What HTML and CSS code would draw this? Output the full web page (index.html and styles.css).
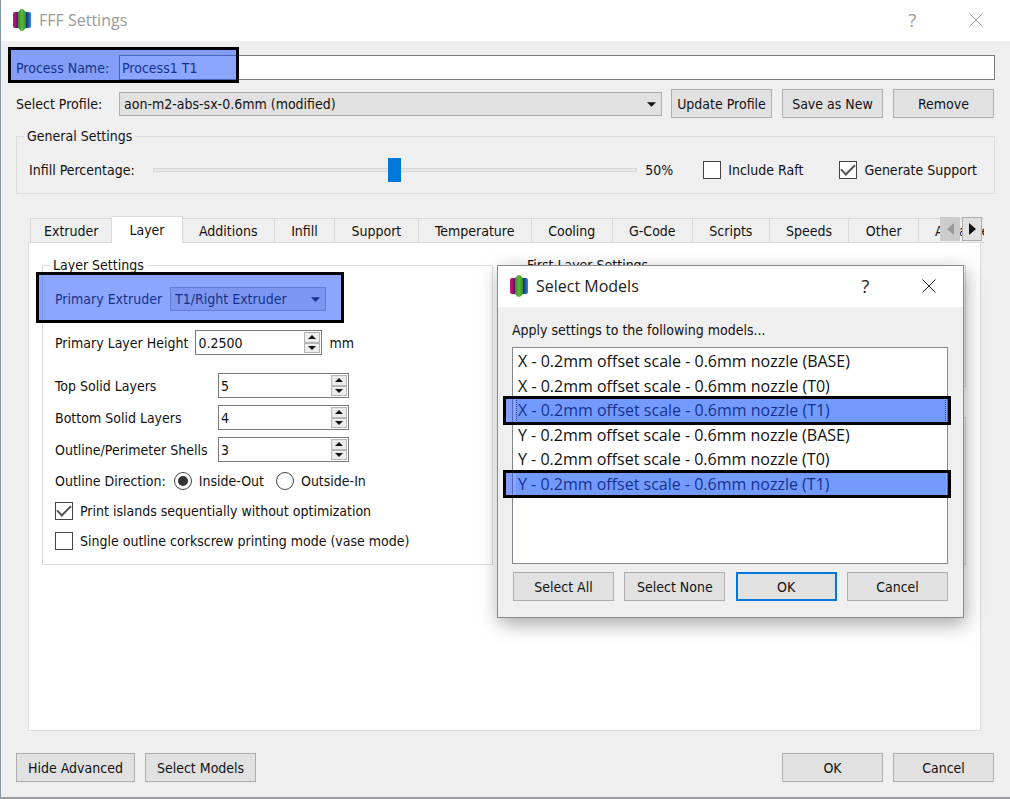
FILE: index.html
```html
<!DOCTYPE html>
<html lang="en">
<head>
  <meta charset="UTF-8">
  <meta name="viewport" content="width=device-width, initial-scale=1.0">
  <title>FFF Settings</title>
  <link rel="stylesheet" href="styles.css">
</head>
<body>
  <svg class="defs" aria-hidden="true">
    <defs>
      <linearGradient id="pink"><stop offset="0" stop-color="#d8107a"/><stop offset=".4" stop-color="#b0126e"/><stop offset="1" stop-color="#3c1658"/></linearGradient>
      <linearGradient id="blue"><stop offset="0" stop-color="#1a2560"/><stop offset=".6" stop-color="#1f5fb0"/><stop offset="1" stop-color="#2b8fe0"/></linearGradient>
      <linearGradient id="green"><stop offset="0" stop-color="#2a8a3e"/><stop offset=".5" stop-color="#62b82c"/><stop offset="1" stop-color="#2a8a3e"/></linearGradient>
    </defs>
    <symbol id="logo" viewBox="0 0 20 22">
      <path d="M1 5q0-2 2-2h3.500v16H3q-2 0-2-2z" fill="url(#pink)"/>
      <path d="M19 5q0-2-2-2h-3.500v16H17q2 0 2-2z" fill="url(#blue)"/>
      <path d="M6 4q0-2 1.500-2.300Q8 0 10 0t2.500 1.700Q14 2 14 4v14q0 2-1.500 2.300Q12 22 10 22t-2.500-1.700Q6 20 6 18z" fill="url(#green)"/>
    </symbol>
    <symbol id="close" viewBox="0 0 14 14"><path d="M.5.5l13 13M13.5.5l-13 13" stroke="currentColor" fill="none"/></symbol>
    <symbol id="up" viewBox="0 0 8 4"><path d="M0 4l4-4 4 4z" fill="currentColor"/></symbol>
    <symbol id="down" viewBox="0 0 8 4"><path d="M0 0l4 4 4-4z" fill="currentColor"/></symbol>
    <symbol id="left" viewBox="0 0 7 12"><path d="M7 0L0 6l7 6z" fill="currentColor"/></symbol>
    <symbol id="right" viewBox="0 0 7 12"><path d="M0 0l7 6-7 6z" fill="currentColor"/></symbol>
  </svg>

  <div class="window">
    <header class="titlebar inactive">
      <svg class="logo"><use href="#logo"/></svg>
      <h1>FFF Settings</h1>
      <button class="caption">?</button>
      <button class="caption" aria-label="Close"><svg class="x"><use href="#close"/></svg></button>
    </header>

    <main class="content">
      <div class="row process">
        <label class="head-label" for="process">Process Name:</label>
        <input class="text grow" id="process" type="text" value="Process1 T1">
        <span class="mark mark-process"></span>
      </div>
      <div class="row profile">
        <label class="head-label" for="profile">Select Profile:</label>
        <span class="combo grow">
          <select id="profile"><option>aon-m2-abs-sx-0.6mm (modified)</option></select>
          <svg class="arrow"><use href="#down"/></svg>
        </span>
        <div class="buttons">
          <button class="btn">Update Profile</button>
          <button class="btn">Save as New</button>
          <button class="btn">Remove</button>
        </div>
      </div>

      <fieldset class="general">
        <legend>General Settings</legend>
        <div class="row">
          <label for="infill">Infill Percentage:</label>
          <input class="slider" id="infill" type="range" min="0" max="100" value="50">
          <output for="infill">50%</output>
          <label class="check raft"><input type="checkbox"> Include Raft</label>
          <label class="check"><input type="checkbox" checked> Generate Support</label>
        </div>
      </fieldset>

      <section class="tabs">
        <div class="tab-strip">
          <div class="tab-list" role="tablist">
            <button class="tab" role="tab">Extruder</button>
            <button class="tab active" role="tab" aria-selected="true">Layer</button>
            <button class="tab" role="tab">Additions</button>
            <button class="tab" role="tab">Infill</button>
            <button class="tab" role="tab">Support</button>
            <button class="tab" role="tab">Temperature</button>
            <button class="tab" role="tab">Cooling</button>
            <button class="tab" role="tab">G-Code</button>
            <button class="tab" role="tab">Scripts</button>
            <button class="tab" role="tab">Speeds</button>
            <button class="tab" role="tab">Other</button>
            <button class="tab cut" role="tab">Advanced</button>
          </div>
          <div class="tab-scroll">
            <button disabled aria-label="Scroll left"><svg><use href="#left"/></svg></button>
            <button aria-label="Scroll right"><svg><use href="#right"/></svg></button>
          </div>
        </div>

        <div class="pane" role="tabpanel">
          <fieldset class="layer">
            <legend>Layer Settings</legend>
            <div class="row extruder">
              <label for="extruder">Primary Extruder</label>
              <span class="combo">
                <select id="extruder"><option>T1/Right Extruder</option></select>
                <svg class="arrow"><use href="#down"/></svg>
              </span>
              <span class="mark mark-extruder"></span>
            </div>
            <div class="row height">
              <label for="height">Primary Layer Height</label>
              <span class="spin">
                <input class="text" id="height" type="text" value="0.2500">
                <span class="steps">
                  <button aria-label="Up"><svg><use href="#up"/></svg></button>
                  <button aria-label="Down"><svg><use href="#down"/></svg></button>
                </span>
              </span>
              <span>mm</span>
            </div>
            <div class="counts">
              <label for="top">Top Solid Layers</label>
              <span class="spin">
                <input class="text" id="top" type="text" value="5">
                <span class="steps">
                  <button aria-label="Up"><svg><use href="#up"/></svg></button>
                  <button aria-label="Down"><svg><use href="#down"/></svg></button>
                </span>
              </span>
              <label for="bottom">Bottom Solid Layers</label>
              <span class="spin">
                <input class="text" id="bottom" type="text" value="4">
                <span class="steps">
                  <button aria-label="Up"><svg><use href="#up"/></svg></button>
                  <button aria-label="Down"><svg><use href="#down"/></svg></button>
                </span>
              </span>
              <label for="shells">Outline/Perimeter Shells</label>
              <span class="spin">
                <input class="text" id="shells" type="text" value="3">
                <span class="steps">
                  <button aria-label="Up"><svg><use href="#up"/></svg></button>
                  <button aria-label="Down"><svg><use href="#down"/></svg></button>
                </span>
              </span>
            </div>
            <div class="row direction">
              <span>Outline Direction:</span>
              <label class="check"><input type="radio" name="direction" checked> Inside-Out</label>
              <label class="check"><input type="radio" name="direction"> Outside-In</label>
            </div>
            <label class="check"><input type="checkbox" checked> Print islands sequentially without optimization</label>
            <label class="check"><input type="checkbox"> Single outline corkscrew printing mode (vase mode)</label>
          </fieldset>
          <div class="side">
            <fieldset>
              <legend>First Layer Settings</legend>
            </fieldset>
            <fieldset></fieldset>
          </div>
        </div>
      </section>

      <footer class="footer">
        <button class="btn fit">Hide Advanced</button>
        <button class="btn fit">Select Models</button>
        <button class="btn push">OK</button>
        <button class="btn">Cancel</button>
      </footer>
    </main>

    <div class="dialog" role="dialog" aria-labelledby="dialog-title">
      <header class="titlebar">
        <svg class="logo"><use href="#logo"/></svg>
        <h2 id="dialog-title">Select Models</h2>
        <button class="caption">?</button>
        <button class="caption" aria-label="Close"><svg class="x"><use href="#close"/></svg></button>
      </header>
      <div class="dialog-body">
        <p>Apply settings to the following models...</p>
        <div class="models">
          <ul role="listbox" aria-multiselectable="true">
            <li role="option">X - 0.2mm offset scale - 0.6mm nozzle (BASE)</li>
            <li role="option">X - 0.2mm offset scale - 0.6mm nozzle (T0)</li>
            <li class="selected focus" role="option" aria-selected="true">X - 0.2mm offset scale - 0.6mm nozzle (T1)<span class="mark"></span></li>
            <li role="option">Y - 0.2mm offset scale - 0.6mm nozzle (BASE)</li>
            <li role="option">Y - 0.2mm offset scale - 0.6mm nozzle (T0)</li>
            <li class="selected" role="option" aria-selected="true">Y - 0.2mm offset scale - 0.6mm nozzle (T1)<span class="mark"></span></li>
          </ul>
        </div>
        <div class="buttons">
          <button class="btn">Select All</button>
          <button class="btn">Select None</button>
          <button class="btn default">OK</button>
          <button class="btn">Cancel</button>
        </div>
      </div>
    </div>
  </div>
</body>
</html>
```
FILE: styles.css
```css
* {
  box-sizing: border-box;
}

body {
  margin: 0;
  font: 14px/18px "DejaVu Sans Condensed", "DejaVu Sans", sans-serif;
  color: #111;
}

h1, h2, p, ul, fieldset {
  margin: 0;
  padding: 0;
}

button, input, select {
  margin: 0;
  padding: 0;
  font: inherit;
  color: inherit;
}

.defs {
  position: absolute;
  width: 0;
  height: 0;
}

.window {
  position: relative;
  display: flex;
  flex-direction: column;
  min-height: 100vh;
  background: #efefef;
  border-left: 1px solid #8497a8;
  border-bottom: 2px solid #9b9da1;
}

/* title bars */
.titlebar {
  display: flex;
  align-items: center;
  height: 41px;
  padding: 0 3px 1px 11px;
  background: #fff;
  color: #222;
}
.titlebar.inactive {
  color: #999;
}
.titlebar h1, .titlebar h2 {
  flex: 1;
  font: 16px/22px "Open Sans", "Noto Sans", sans-serif;
}
.logo {
  width: 20px;
  height: 22px;
  margin-right: 7px;
}
.caption {
  display: flex;
  align-items: center;
  justify-content: center;
  width: 63px;
  height: 40px;
  border: 0;
  background: none;
  font: 18px/22px "Open Sans", "Noto Sans", sans-serif;
}
.x {
  width: 14px;
  height: 14px;
}

.content {
  display: flex;
  flex-direction: column;
  flex: 1;
  padding: 14px 15px 15px;
}

.row {
  display: flex;
  align-items: center;
  position: relative;
}
.grow {
  flex: 1;
}
.head-label {
  width: 103px;
}
.process {
  height: 25px;
}
.profile {
  margin: 9px 1px 0 0;
}

/* controls */
.text {
  height: 25px;
  padding: 0 2px;
  border: 1px solid #7a7a7a;
  background: #fff;
}
.btn {
  width: 101px;
  height: 29px;
  border: 1px solid #adadad;
  background: #e1e1e1;
  white-space: nowrap;
}
.btn.fit {
  width: auto;
  padding: 0 11px;
}
.btn.default {
  border: 2px solid #0078d7;
}
.buttons {
  display: flex;
  gap: 10px;
}
.profile .buttons {
  margin-left: 9px;
}
.combo {
  position: relative;
  display: flex;
}
.combo select {
  appearance: none;
  width: 100%;
  height: 24px;
  padding: 0 24px 0 4px;
  border: 1px solid #adadad;
  border-radius: 0;
  background: #e1e1e1;
}
.arrow {
  position: absolute;
  right: 6px;
  top: 10px;
  width: 9px;
  height: 5px;
  pointer-events: none;
}
.spin {
  display: flex;
  width: 131px;
  height: 25px;
  border: 1px solid #7a7a7a;
  background: #fff;
}
.spin .text {
  flex: 1;
  min-width: 0;
  height: 23px;
  border: 0;
}
.steps {
  display: flex;
  flex-direction: column;
  width: 17px;
  padding: 1px 1px 1px 0;
}
.steps button {
  display: flex;
  flex: 1;
  align-items: center;
  justify-content: center;
  border: 1px solid #b4b4b4;
  background: #ececec;
}
.steps svg {
  width: 8px;
  height: 4px;
}

.check {
  display: flex;
  align-items: center;
  gap: 7px;
}
.check input {
  appearance: none;
  display: flex;
  align-items: center;
  justify-content: center;
  width: 18px;
  height: 18px;
  border: 1px solid #444;
  background: #fff;
}
.check input[type="checkbox"]:checked::before {
  content: "";
  width: 12px;
  height: 6px;
  margin-bottom: 4px;
  border-left: 2px solid #555;
  border-bottom: 2px solid #555;
  transform: rotate(-45deg);
}
.check input[type="radio"] {
  border-radius: 50%;
}
.check input[type="radio"]:checked::before {
  content: "";
  width: 10px;
  height: 10px;
  border-radius: 50%;
  background: #333;
}

.slider {
  appearance: none;
  flex: 1;
  height: 24px;
  margin: 0 8px 0 18px;
  background: none;
}
.slider::-webkit-slider-runnable-track {
  height: 4px;
  border: 1px solid #d6d6d6;
  background: #e7eaea;
}
.slider::-webkit-slider-thumb {
  appearance: none;
  width: 13px;
  height: 24px;
  margin-top: -11px;
  background: #0078d7;
}

fieldset {
  min-width: 0;
  border: 1px solid #dcdcdc;
}
legend {
  margin-left: 7px;
  padding: 0 3px;
}

.general {
  height: 67px;
  margin-top: 9px;
}
.general .row {
  padding: 13px 17px 0 12px;
}
.raft {
  margin: 0 36px 0 30px;
}

/* tabs */
.tabs {
  display: flex;
  flex-direction: column;
  flex: 1;
  margin: 22px 14px 0 12px;
}
.tab-strip {
  position: relative;
  z-index: 1;
  margin-right: -3px;
  margin-bottom: -1px;
}
.tab-list {
  display: flex;
  align-items: flex-end;
  height: 27px;
  padding-left: 2px;
  overflow: hidden;
}
.tab {
  flex: 1 0 auto;
  height: 25px;
  padding: 0 16px;
  border: 1px solid #d9d9d9;
  border-left: 0;
  background: #efefef;
}
.tab:first-child {
  flex: none;
  padding: 0 13px;
  border-left: 1px solid #d9d9d9;
}
.tab.active {
  flex: none;
  height: 27px;
  padding: 0 17px;
  border-bottom: 0;
  background: #fff;
}
.tab.cut {
  flex: 0 0 65px;
  padding-right: 0;
  border-right: 0;
  overflow: hidden;
  text-align: left;
}
.tab-scroll {
  position: absolute;
  right: 2px;
  top: 1px;
  display: flex;
  gap: 2px;
}
.tab-scroll button {
  display: flex;
  align-items: center;
  justify-content: center;
  width: 20px;
  height: 24px;
  border: 1px solid #adadad;
  background: #e1e1e1;
}
.tab-scroll button:disabled {
  border-color: #ccc;
  background: #ccc;
  color: #999;
}
.tab-scroll svg {
  width: 7px;
  height: 12px;
}
.pane {
  display: grid;
  grid-template-columns: 451px 1fr;
  gap: 23px;
  align-items: start;
  flex: 1;
  padding: 13px 14px 20px 13px;
  border: 1px solid #dcdcdc;
  background: #fff;
}
.layer {
  display: flex;
  flex-direction: column;
  padding: 13px 12px 13px;
}
.layer legend {
  margin-left: -5px;
}
.layer .check {
  margin-top: 10px;
  height: 20px;
}
.extruder {
  gap: 8px;
}
.extruder .combo {
  width: 156px;
}
.height {
  gap: 7px;
  margin-top: 19px;
}
.height .spin {
  width: 127px;
}
.counts {
  display: grid;
  grid-template-columns: 163px 131px;
  gap: 7px 0;
  align-items: center;
  margin-top: 18px;
}
.direction {
  gap: 8px;
  margin-top: 9px;
}
.layer .direction .check {
  margin-top: 0;
}
.direction .check + .check {
  margin-left: 4px;
}
.side {
  display: grid;
  gap: 30px;
}
.side fieldset:first-child {
  height: 131px;
}
.side fieldset {
  height: 148px;
}

.footer {
  display: flex;
  gap: 10px;
  margin: 22px 1px 0 0;
}
.push {
  margin-left: auto;
}

/* dialog floats over the settings window */
.dialog {
  position: absolute;
  right: 46px;
  top: 265px;
  width: 467px;
  border: 1px solid #8c8c8c;
  background: #efefef;
  box-shadow: 2px 6px 18px rgba(0, 0, 0, .35);
}
.dialog-body {
  padding: 14px 15px 16px 14px;
}
.models {
  height: 217px;
  margin: 8px 0;
  border: 1px solid #828790;
  background: #fff;
}
.models ul {
  display: grid;
  grid-template-rows: repeat(6, 1fr);
  height: 148px;
  padding: 1px 1px 0 3px;
  font: 16px/22px "Open Sans", "Noto Sans", sans-serif;
  list-style: none;
}
.models li {
  position: relative;
  display: flex;
  align-items: center;
  padding-left: 2px;
}
.models .selected {
  background: #cde8ff;
}
.models .focus {
  outline: 1px dotted #335;
  outline-offset: -1px;
}
.models .mark {
  inset: -2px -5px -2px -13px;
}
.dialog .buttons {
  justify-content: space-between;
  padding-left: 1px;
}

/* highlight boxes */
.mark {
  position: absolute;
  border: 3px solid #000;
  background: rgba(25, 77, 255, .5);
  pointer-events: none;
}
.mark-process {
  left: -8px;
  top: -8px;
  width: 231px;
  height: 36px;
}
.mark-extruder {
  left: -19px;
  top: -15px;
  width: 308px;
  height: 51px;
}
```
